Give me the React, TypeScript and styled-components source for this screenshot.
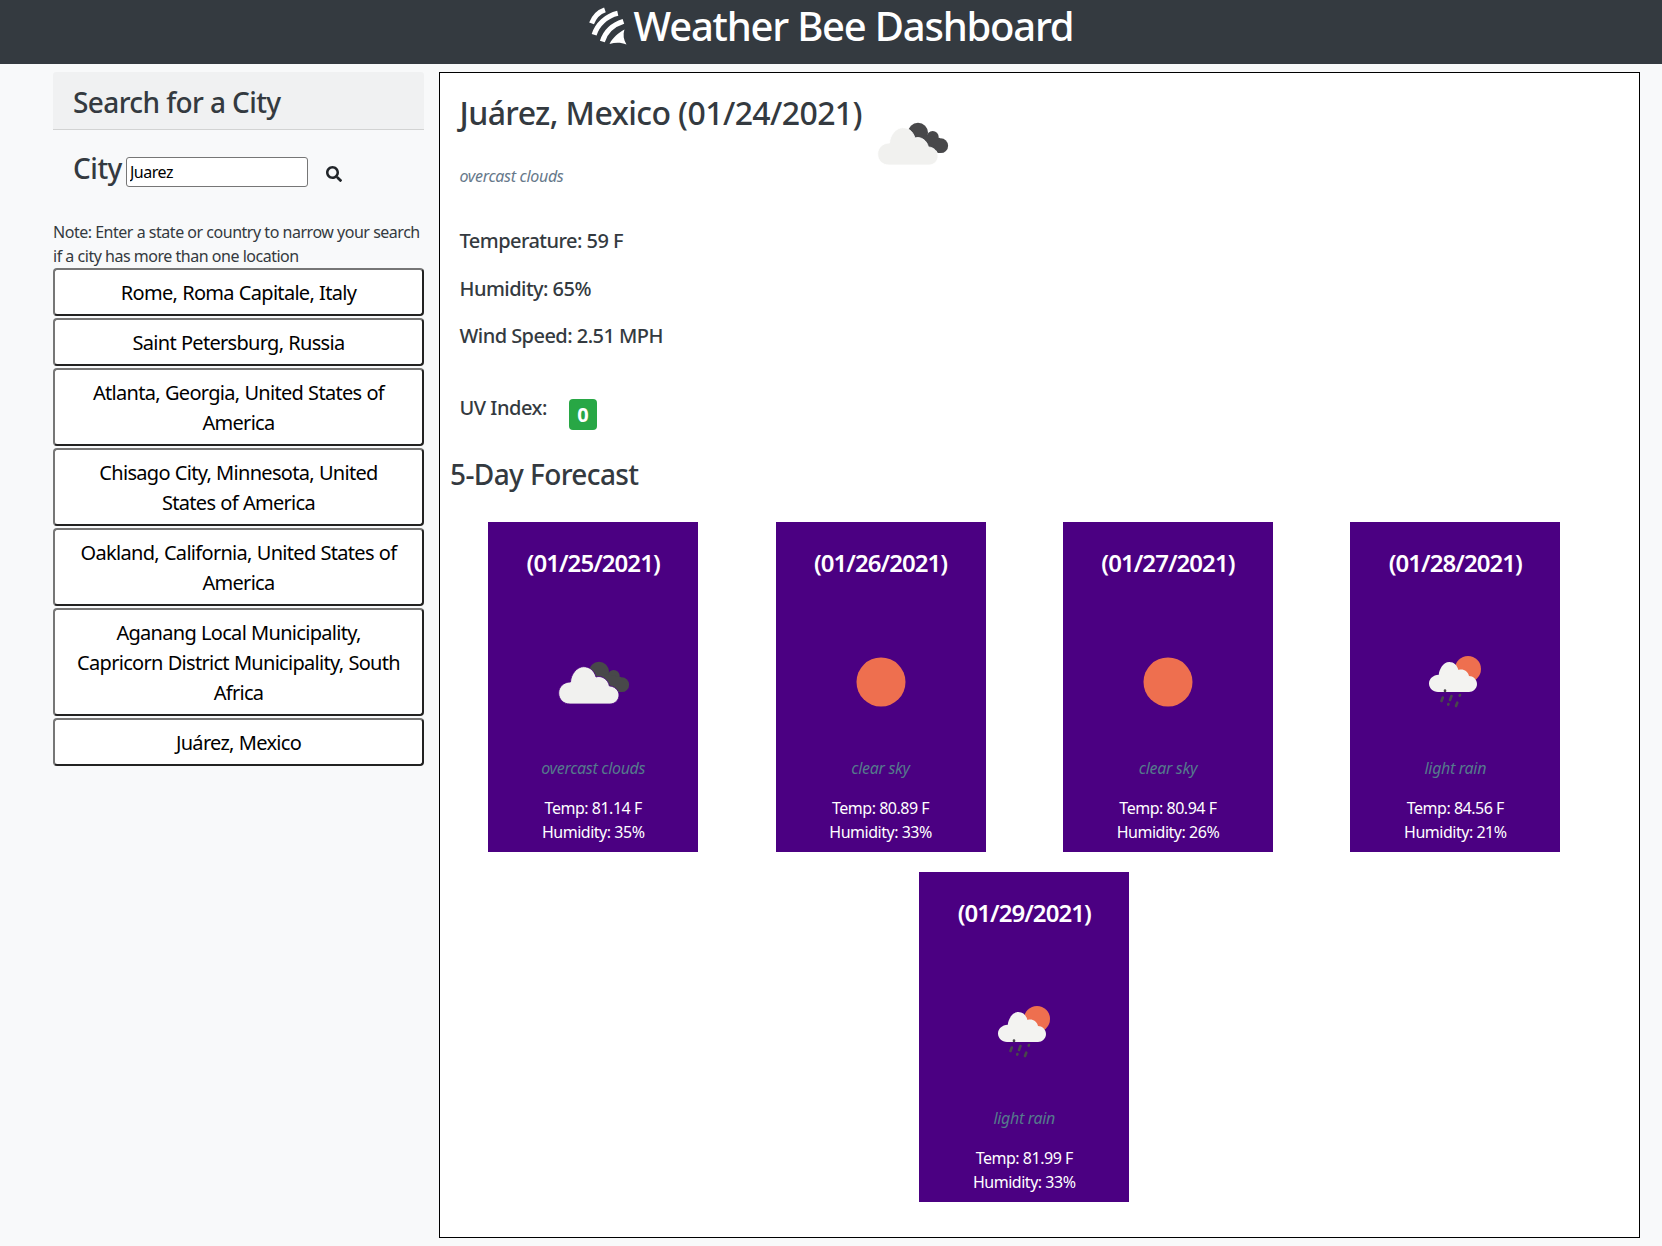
import React from 'react';
import styled, {createGlobalStyle} from 'styled-components';

const GlobalStyle = createGlobalStyle`
    html, body {
        margin: 0;
        background: #f8f9fa;
        font-family: "Noto Sans", "Open Sans", sans-serif;
        font-size: 16px;
        line-height: 1.5;
        color: #343a40;
        letter-spacing: -0.48px;
    }
    * { box-sizing: border-box; }
`;

const TopBar = styled.header`
    height: 64px;
    background: #343a40;
    display: flex;
    align-items: flex-start;
    justify-content: center;
    gap: 7px;
    padding-top: 2px;
`;

const Title = styled.h1`
    margin: 0;
    font-size: 40px;
    line-height: 48px;
    font-weight: 500;
    letter-spacing: -1.22px;
    color: #fff;
`;

const Page = styled.div`
    display: grid;
    grid-template-columns: 371px 1201px;
    column-gap: 15px;
    padding: 8px 0 8px 53px;
    align-items: start;
`;

const SideHead = styled.h2`
    margin: 0;
    height: 58px;
    padding: 9px 20px 7px;
    background: rgba(0, 0, 0, 0.03);
    border-bottom: 1px solid rgba(0, 0, 0, 0.125);
    border-radius: 3px 3px 0 0;
    font-size: 28px;
    line-height: 42px;
    font-weight: 500;
    letter-spacing: -0.6px;
`;

const SearchRow = styled.form`
    display: flex;
    align-items: flex-start;
    padding: 20px 0 0 20px;
    height: 90px;
`;

const CityLabel = styled.label`
    font-size: 28px;
    line-height: 36px;
    font-weight: 500;
    margin-right: 4px;
`;

const CityInput = styled.input`
    width: 182px;
    height: 30px;
    margin-top: 7px;
    padding: 1px 3px;
    border: 1px solid #767676;
    border-radius: 3px;
    background: #fff;
    color: #000;
    font-family: inherit;
    font-size: 16px;
    letter-spacing: inherit;
`;

const SearchIcon = styled.svg`
    width: 16px;
    height: 16px;
    margin: 16px 0 0 18px;
    fill: #212529;
`;

const Note = styled.p`
    margin: 0;
    font-size: 16px;
    line-height: 24px;
`;

const CityList = styled.div`
    display: flex;
    flex-direction: column;
    gap: 2px;
`;

const CityButton = styled.button`
    width: 100%;
    padding: 8px 16px 6px;
    background: #fff;
    border-width: 2px;
    border-style: solid;
    border-color: #767676 #222 #222 #767676;
    border-radius: 4px;
    font-family: inherit;
    font-size: 20px;
    line-height: 30px;
    letter-spacing: -0.7px;
    word-spacing: 0.5px;
    color: #000;
    text-align: center;
    white-space: pre-line;
`;

const Panel = styled.main`
    height: 1166px;
    border: 1px solid #000;
    background: #fff;
    padding: 16px 40px 0 9.5px;
`;

const CityHead = styled.div`
    display: flex;
    align-items: flex-start;
    height: 75px;
    padding-left: 10px;
`;

const CityName = styled.h2`
    margin: 0;
    width: 402px;
    font-size: 32px;
    line-height: 48px;
    font-weight: 500;
    letter-spacing: -0.6px;
    white-space: nowrap;
`;

const HeadIcon = styled.svg`
    flex: none;
    width: 100px;
    height: 100px;
    margin-top: 4px;
`;

const Sky = styled.p`
    margin: 0 0 38px 10px;
    font-size: 16px;
    line-height: 24px;
    font-style: italic;
    letter-spacing: -0.32px;
    color: #66788a;
`;

const Stat = styled.p`
    margin: 0 0 17.6px 10px;
    font-size: 20px;
    line-height: 30px;
    font-weight: 500;
    letter-spacing: -0.54px;
`;

const UvRow = styled.div`
    display: flex;
    align-items: flex-start;
    gap: 22px;
    margin: 42px 0 0 10px;
    height: 60px;
    font-size: 20px;
    line-height: 30px;
    font-weight: 500;
`;

const UvBadge = styled.span`
    width: 28px;
    height: 31px;
    margin-top: 6px;
    background: #28a745;
    border-radius: 4px;
    color: #fff;
    font-size: 20px;
    line-height: 31px;
    font-weight: 700;
    text-align: center;
`;

const ForecastTitle = styled.h3`
    margin: 0 0 0 0.5px;
    font-size: 28px;
    line-height: 42px;
    font-weight: 500;
    letter-spacing: -0.6px;
`;

const ForecastGrid = styled.div`
    display: flex;
    flex-wrap: wrap;
    justify-content: space-around;
    row-gap: 20px;
    margin-top: 27px;
`;

const Card = styled.article`
    width: 210px;
    height: 330px;
    margin: 0 20px;
    background: #4b0082;
    color: #fff;
    text-align: center;
    display: flex;
    flex-direction: column;
    align-items: center;
    padding-top: 23px;
`;

const CardDate = styled.h4`
    margin: 0;
    font-size: 24px;
    line-height: 36px;
    font-weight: 600;
    letter-spacing: -0.95px;
`;

const CardIcon = styled.svg`
    width: 100px;
    height: 100px;
    margin-top: 51px;
`;

const CardSky = styled.p`
    margin: 24px 0 0;
    font-size: 16px;
    line-height: 24px;
    font-style: italic;
    letter-spacing: -0.32px;
    color: #557a8c;
`;

const CardLine = styled.p<{$first?: boolean}>`
    margin: ${(p) => (p.$first ? '16px' : '0')} 0 0;
    font-size: 16px;
    line-height: 24px;
`;

const LogoMark = styled.svg`
    flex: none;
    width: 38px;
    height: 38px;
    margin-top: 5px;
`;

const BeeLogo = () => (
    <LogoMark viewBox="0 0 37 37" fill="none" stroke="#fff" strokeWidth="5">
        <path d="M2.500 16C5 9.500 9 5 15.500 2.800" />
        <path d="M5 27C8 17 17 8.500 28 6" />
        <path d="M13 33.500C16 24 24 17 33.500 14" />
        <path d="M20 36C23 30 29 25 34.500 22C33 27 33.500 32 36.500 36.500C31 34.500 26 34.500 20 36Z" fill="#fff" stroke="none" />
    </LogoMark>
);

const Clouds = ({gap}: {gap: string}) => (
    <>
        <g fill="#48484a">
            <circle cx="56" cy="39.7" r="10" />
            <circle cx="70.7" cy="44" r="6" />
            <circle cx="78.7" cy="52.7" r="7.4" />
            <path d="M50 40L78 45V60H60Z" />
        </g>
        <path
            d="M27 72C20 72 15.7 67 15.7 61C15.7 55 20.500 50 27.500 50C28 42 34 34.700 40.700 34.700C46 34.700 51 38 53 45C58 43 65 47 66.400 54C71 54 76 58 76 63C76 68 72 72 67 72Z"
            fill="#f1f1ef"
            stroke={gap}
            strokeWidth="0.8"
        />
    </>
);

const Sun = () => <circle cx="50" cy="50" r="24.5" fill="#ee6f4f" />;

const Rain = () => (
    <>
        <circle cx="63" cy="37" r="13" fill="#ee6f4f" />
        <path
            d="M33 60C28 60 24 56 24 51.500C24 47 28 43 33.800 42.800C34 38 38 30 44.300 30C49 30 52 33 53.500 38C58 36.500 63 39 64 44C68 44 72 47.500 72 52C72 56.500 68 60 64 60Z"
            fill="#f3f3f1"
        />
        <g stroke="#48484a" strokeWidth="2.6" strokeLinecap="round" fill="none">
            <path d="M40 58.500V59" />
            <path d="M37.800 65.500L36.500 69" />
            <path d="M46.500 64L45 68" />
            <path d="M55 63L54.700 63.600" />
            <path d="M43.400 72L43.200 72.600" />
            <path d="M52.300 70.700L51 74" />
        </g>
    </>
);

const cities = [
    'Rome, Roma Capitale, Italy',
    'Saint Petersburg, Russia',
    'Atlanta, Georgia, United States of\nAmerica',
    'Chisago City, Minnesota, United\nStates of America',
    'Oakland, California, United States of\nAmerica',
    'Aganang Local Municipality,\nCapricorn District Municipality, South\nAfrica',
    'Juárez, Mexico',
];

const forecast = [
    {date: '(01/25/2021)', sky: 'overcast clouds', temp: '81.14', hum: 35, icon: 'cloud'},
    {date: '(01/26/2021)', sky: 'clear sky', temp: '80.89', hum: 33, icon: 'sun'},
    {date: '(01/27/2021)', sky: 'clear sky', temp: '80.94', hum: 26, icon: 'sun'},
    {date: '(01/28/2021)', sky: 'light rain', temp: '84.56', hum: 21, icon: 'rain'},
    {date: '(01/29/2021)', sky: 'light rain', temp: '81.99', hum: 33, icon: 'rain'},
];

export default function App() {
    return (
        <>
            <GlobalStyle />
            <TopBar>
                <BeeLogo />
                <Title>Weather Bee Dashboard</Title>
            </TopBar>
            <Page>
                <aside>
                    <SideHead>Search for a City</SideHead>
                    <SearchRow>
                        <CityLabel htmlFor="city">City</CityLabel>
                        <CityInput id="city" defaultValue="Juarez" />
                        <SearchIcon viewBox="0 0 512 512">
                            <path d="M505 442.700L405.300 343c-4.500-4.500-10.600-7-17-7H372c27.600-35.300 44-79.700 44-128C416 93.100 322.900 0 208 0S0 93.100 0 208s93.100 208 208 208c48.300 0 92.700-16.400 128-44v16.300c0 6.400 2.500 12.500 7 17l99.700 99.700c9.400 9.400 24.600 9.400 33.900 0l28.300-28.300c9.400-9.400 9.400-24.600.1-34zM208 336c-70.700 0-128-57.200-128-128 0-70.700 57.200-128 128-128 70.700 0 128 57.200 128 128 0 70.700-57.200 128-128 128z" />
                        </SearchIcon>
                    </SearchRow>
                    <Note>Note: Enter a state or country to narrow your search if a city has more than one location</Note>
                    <CityList>
                        {cities.map((city) => (
                            <CityButton key={city} type="button">{city}</CityButton>
                        ))}
                    </CityList>
                </aside>
                <Panel>
                    <CityHead>
                        <CityName>Juárez, Mexico (01/24/2021)</CityName>
                        <HeadIcon viewBox="0 0 100 100"><Clouds gap="#fff" /></HeadIcon>
                    </CityHead>
                    <Sky>overcast clouds</Sky>
                    <Stat>Temperature: 59 F</Stat>
                    <Stat>Humidity: 65%</Stat>
                    <Stat>Wind Speed: 2.51 MPH</Stat>
                    <UvRow>
                        <span>UV Index:</span>
                        <UvBadge>0</UvBadge>
                    </UvRow>
                    <ForecastTitle>5-Day Forecast</ForecastTitle>
                    <ForecastGrid>
                        {forecast.map((day) => (
                            <Card key={day.date}>
                                <CardDate>{day.date}</CardDate>
                                <CardIcon viewBox="0 0 100 100">
                                    {day.icon === 'cloud' && <Clouds gap="#4b0082" />}
                                    {day.icon === 'sun' && <Sun />}
                                    {day.icon === 'rain' && <Rain />}
                                </CardIcon>
                                <CardSky>{day.sky}</CardSky>
                                <CardLine $first>Temp: {day.temp} F</CardLine>
                                <CardLine>Humidity: {day.hum}%</CardLine>
                            </Card>
                        ))}
                    </ForecastGrid>
                </Panel>
            </Page>
        </>
    );
}
